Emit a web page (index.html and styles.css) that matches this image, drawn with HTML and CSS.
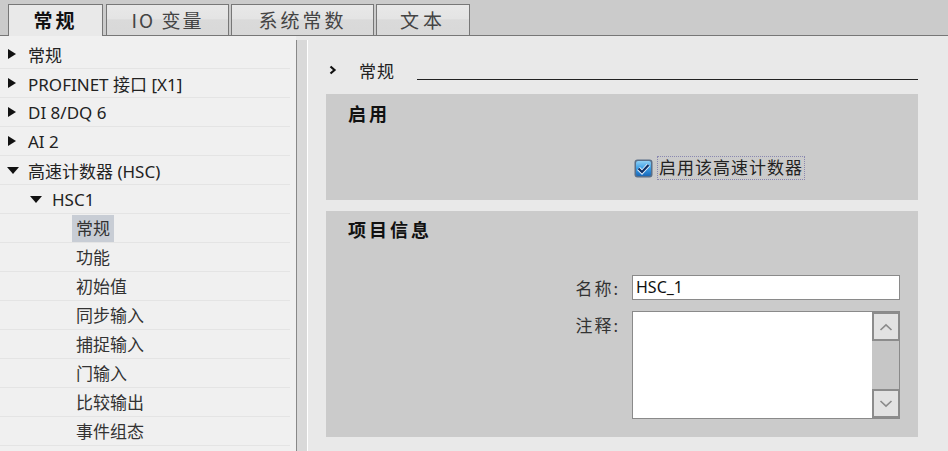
FILE: index.html
```html
<!DOCTYPE html>
<html lang="zh-CN">
<head>
    <meta charset="UTF-8">
    <title>HSC1 - 常规</title>
    <link rel="stylesheet" href="styles.css">
</head>
<body>

    <div class="tabbar">
        <div class="tab active tab-general">常规</div>
        <div class="tab tab-io">IO 变量</div>
        <div class="tab tab-const">系统常数</div>
        <div class="tab tab-text">文本</div>
    </div>

    <div class="main">

        <div class="tree">
            <div class="tree-row"><span class="arrow"><i class="tri-right"></i></span>常规</div>
            <div class="tree-row"><span class="arrow"><i class="tri-right"></i></span>PROFINET 接口 [X1]</div>
            <div class="tree-row"><span class="arrow"><i class="tri-right"></i></span>DI 8/DQ 6</div>
            <div class="tree-row"><span class="arrow"><i class="tri-right"></i></span>AI 2</div>
            <div class="tree-row"><span class="arrow"><i class="tri-down"></i></span>高速计数器 (HSC)</div>
            <div class="tree-row level2"><span class="arrow"><i class="tri-down"></i></span>HSC1</div>
            <div class="tree-row level3"><span class="leaf selected">常规</span></div>
            <div class="tree-row level3"><span class="leaf">功能</span></div>
            <div class="tree-row level3"><span class="leaf">初始值</span></div>
            <div class="tree-row level3"><span class="leaf">同步输入</span></div>
            <div class="tree-row level3"><span class="leaf">捕捉输入</span></div>
            <div class="tree-row level3"><span class="leaf">门输入</span></div>
            <div class="tree-row level3"><span class="leaf">比较输出</span></div>
            <div class="tree-row level3"><span class="leaf">事件组态</span></div>
        </div>

        <div class="splitter"></div>

        <div class="panel">
            <div class="panel-heading">
                <svg class="chev" width="8" height="10" viewBox="0 0 8 10">
                    <path d="M1.5 1.5 L5.5 5 L1.5 8.5" fill="none" stroke="#111" stroke-width="2.2"/>
                </svg>
                <span class="heading-text">常规</span>
                <span class="heading-rule"></span>
            </div>

            <div class="section">
                <div class="section-title">启用</div>
                <div class="field-row check-row">
                    <span></span>
                    <label class="check">
                        <svg class="checkbox" width="19" height="19" viewBox="0 0 19 19">
                            <defs>
                                <linearGradient id="cbfill" x1="0" y1="0" x2="0" y2="1">
                                    <stop offset="0" stop-color="#8fd0f5"/>
                                    <stop offset="0.5" stop-color="#3a9ee6"/>
                                    <stop offset="1" stop-color="#1867b8"/>
                                </linearGradient>
                            </defs>
                            <rect x="0.5" y="0.5" width="18" height="18" rx="3" fill="#5a6f88"/>
                            <rect x="2" y="2" width="15" height="15" rx="2" fill="url(#cbfill)"/>
                            <path d="M4.5 9.5 L8 13 L14.5 6" fill="none" stroke="#e8f4ff" stroke-width="4"/>
                            <path d="M4.5 9.5 L8 13 L14.5 6" fill="none" stroke="#0f2f63" stroke-width="2.2"/>
                        </svg>
                        <span class="check-label">启用该高速计数器</span>
                    </label>
                </div>
            </div>

            <div class="section">
                <div class="section-title">项目信息</div>
                <div class="field-row name-row">
                    <span class="field-label">名称:</span>
                    <div class="input">HSC_1</div>
                </div>
                <div class="field-row comment-row">
                    <span class="field-label">注释:</span>
                    <div class="textarea">
                        <div class="textarea-body"></div>
                        <div class="scrollbar">
                            <div class="scroll-btn">
                                <svg width="14" height="8" viewBox="0 0 14 8"><path d="M1.5 7 L7 1.8 L12.5 7" fill="none" stroke="#8a8a8a" stroke-width="1.6"/></svg>
                            </div>
                            <div class="scroll-track"></div>
                            <div class="scroll-btn">
                                <svg width="14" height="8" viewBox="0 0 14 8"><path d="M1.5 1 L7 6.2 L12.5 1" fill="none" stroke="#8a8a8a" stroke-width="1.6"/></svg>
                            </div>
                        </div>
                    </div>
                </div>
            </div>
        </div>

    </div>

</body>
</html>
```

FILE: styles.css
```css
body {
    margin: 0;
    padding: 0;
    width: 948px;
    height: 451px;
    overflow: hidden;
    background-color: #e9e9e9;
    font-family: "Noto Sans", "Noto Sans CJK SC", sans-serif;
    color: #222;
}


.tabbar {
    height: 35px;
    background-color: #cbcbcb;
    border-bottom: 1px solid #777;
    display: flex;
    align-items: flex-end;
    gap: 2px;
    padding-left: 8px;
}

.tab {
    box-sizing: border-box;
    height: 31px;
    border: 1px solid #777;
    border-bottom: none;
    background: linear-gradient(#e8e8e8 0%, #e4e4e4 45%, #dadada 50%, #d8d8d8 100%);
    color: #444;
    font-family: "Noto Sans CJK SC", sans-serif;
    font-size: 19px;
    letter-spacing: 2px;
    line-height: 30px;
    text-align: center;
}

.tab.active {
    background: #e9e9e9;
    color: #111;
    font-weight: bold;
    height: 32px;
    margin-bottom: -1px;
    margin-right: 1px;
    letter-spacing: 3px;
}

.tab-general { width: 95px; }
.tab-io { width: 123px; }
.tab-const { width: 143px; letter-spacing: 3px; }
.tab-text { width: 94px; letter-spacing: 4px; }


.main {
    display: flex;
    height: 415px;
}


.tree {
    width: 296px;
    background-color: #f0f0f0;
    padding-top: 4px;
    font-size: 17px;
}

.tree-row {
    height: 28px;
    border-bottom: 1px solid #e4e4e4;
    margin-right: 6px;
    display: flex;
    align-items: center;
    padding-left: 8px;
    white-space: nowrap;
}

.tree-row .arrow {
    width: 20px;
    display: flex;
    align-items: center;
}

.tri-right {
    width: 0;
    height: 0;
    border-left: 8px solid #111;
    border-top: 5px solid transparent;
    border-bottom: 5px solid transparent;
}

.tri-down {
    width: 0;
    height: 0;
    margin-left: -1px;
    border-top: 7px solid #111;
    border-left: 6px solid transparent;
    border-right: 6px solid transparent;
}

.tree-row.level2 {
    padding-left: 31px;
}

.tree-row.level2 .arrow {
    width: 21px;
}

.tree-row.level3 {
    padding-left: 72px;
}

.leaf {
    padding: 0 4px;
    height: 27px;
    line-height: 27px;
    color: #333;
}

.leaf.selected {
    background-color: #c8cdd5;
}


.splitter {
    width: 10px;
    margin-top: 4px;
    background-color: #d9d9d9;
    border-left: 1px solid #888;
    border-right: 1px solid #fff;
}


.panel {
    flex: 1;
    padding: 22px 30px 0 18px;
}

.panel-heading {
    height: 24px;
    display: flex;
    align-items: center;
    margin-bottom: 12px;
}

.chev {
    margin-left: 3px;
}

.heading-text {
    margin-left: 22px;
    font-family: "Noto Sans CJK SC", sans-serif;
    font-size: 17px;
    letter-spacing: 1px;
    color: #222;
}

.heading-rule {
    flex: 1;
    height: 1px;
    background-color: #222;
    margin: 18px 0 0 22px;
}


.section {
    background-color: #cbcbcb;
    padding: 8px 18px 20px 22px;
    margin-bottom: 11px;
}

.section + .section {
    padding-top: 7px;
    padding-bottom: 18px;
}

.section-title {
    height: 22px;
    line-height: 22px;
    font-family: "Noto Sans CJK SC", sans-serif;
    font-size: 18px;
    font-weight: bold;
    letter-spacing: 3px;
    color: #111;
}

.field-row {
    display: grid;
    grid-template-columns: 272px 1fr;
    column-gap: 12px;
}

.check-row {
    margin-top: 32px;
    height: 24px;
}

.check {
    display: flex;
    align-items: center;
    gap: 4px;
    margin-left: 2px;
}

.check-label {
    border: 1px dotted #8a88b0;
    padding: 0 1px;
    height: 22px;
    line-height: 22px;
    font-size: 17px;
    letter-spacing: 1px;
    color: #222;
}

.field-label {
    text-align: right;
    font-size: 17px;
    color: #333;
    letter-spacing: 2px;
}

.name-row {
    margin-top: 35px;
    align-items: center;
}

.input {
    height: 23px;
    line-height: 23px;
    background-color: #fff;
    border: 1px solid #8a8a8a;
    padding-left: 3px;
    font-size: 16px;
    color: #111;
}

.comment-row {
    margin-top: 11px;
}

.comment-row .field-label {
    padding-top: 1px;
}

.textarea {
    height: 106px;
    border: 1px solid #8a8a8a;
    background-color: #fff;
    display: flex;
}

.textarea-body {
    flex: 1;
}

.scrollbar {
    width: 27px;
    display: flex;
    flex-direction: column;
    background-color: #c6c6c6;
}

.scroll-btn {
    height: 25px;
    background-color: #e2e2e2;
    border: 2px solid #8c8c8c;
    border-right-width: 1px;
    display: flex;
    align-items: center;
    justify-content: center;
}

.scroll-track {
    flex: 1;
}
```
